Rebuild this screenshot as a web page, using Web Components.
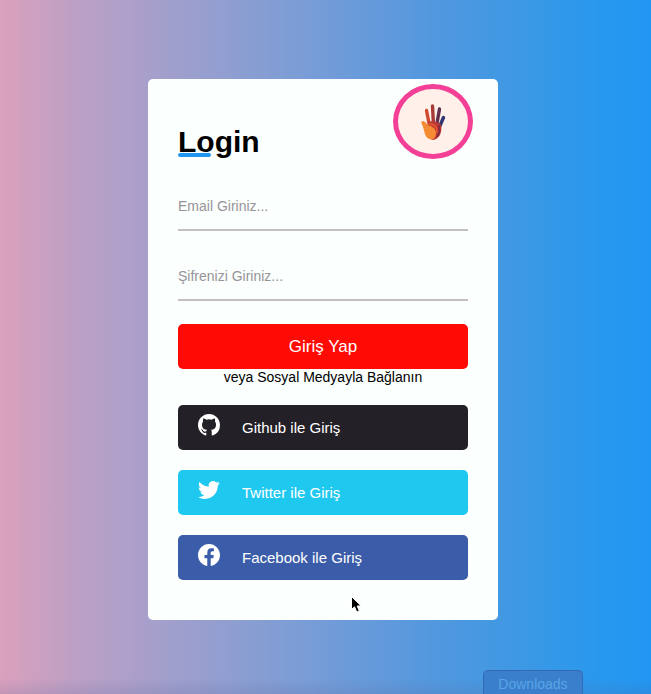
<!DOCTYPE html>
<html lang="tr">
<head>
<meta charset="utf-8">
<meta name="viewport" content="width=device-width, initial-scale=1">
<title>Login</title>
<style>
  html, body { margin: 0; min-height: 100%; }
  body { font-family: "Liberation Sans", Arial, Helvetica, sans-serif; font-size: 14px; line-height: 16px; color: #000; }
</style>
</head>
<body>
<login-page>
  <login-card heading="Login">
    <hand-avatar slot="badge"></hand-avatar>
    <line-field type="email" name="email" hint="Email Giriniz..."></line-field>
    <line-field type="password" name="password" hint="Şifrenizi Giriniz..."></line-field>
    <submit-button slot="actions">Giriş Yap</submit-button>
    <span slot="note">veya Sosyal Medyayla Bağlanın</span>
    <social-button slot="social" brand="github">Github ile Giriş</social-button>
    <social-button slot="social" brand="twitter">Twitter ile Giriş</social-button>
    <social-button slot="social" brand="facebook">Facebook ile Giriş</social-button>
  </login-card>
  <dock-label slot="overlay">Downloads</dock-label>
  <mouse-pointer slot="overlay"></mouse-pointer>
</login-page>

<script>
const define = (name, render) => customElements.define(name, class extends HTMLElement {
  constructor() { super(); this.attachShadow({ mode: "open" }); }
  connectedCallback() { this.shadowRoot.innerHTML = render(this); }
});

define("login-page", () => `
  <style>
    :host {
      display: flex; position: relative; box-sizing: border-box; min-height: 100vh; overflow: hidden;
      align-items: center; justify-content: center; padding: 5px 5px 0 0;
      background:
        linear-gradient(to top, rgba(90, 100, 150, .18), rgba(90, 100, 150, 0) 16px),
        linear-gradient(to right, #dba0bc 0%, #bea0c5 11%, #a19fcc 26%, #7b9dd6 46%, #5398de 66%, #3d98e4 80%, #2898ee 92%, #2196f3 100%);
    }
  </style>
  <slot></slot><slot name="overlay"></slot>`);

define("login-card", el => `
  <style>
    :host {
      display: block; position: relative; box-sizing: border-box; width: 100%; max-width: 350px;
      padding: 46px 30px 40px; border-radius: 5px; background: #fbfffd;
    }
    form { display: flex; flex-direction: column; }
    h1 { position: relative; align-self: flex-start; margin: 0 0 27px; font-size: 30px; line-height: 34px; }
    h1::after {
      content: ""; position: absolute; left: 0; bottom: 2px; width: 33px; height: 4px;
      border-radius: 2px; background: #2196f3;
    }
    .fields { display: grid; gap: 25px; margin-bottom: 23px; }
    .note { text-align: center; margin-bottom: 20px; }
    .social { display: grid; gap: 20px; }
    ::slotted([slot="badge"]) { position: absolute; top: 5px; right: 25px; }
  </style>
  <slot name="badge"></slot>
  <form>
    <h1>${el.getAttribute("heading")}</h1>
    <div class="fields"><slot></slot></div>
    <slot name="actions"></slot>
    <div class="note"><slot name="note"></slot></div>
    <div class="social"><slot name="social"></slot></div>
  </form>`);

define("line-field", el => `
  <style>
    :host { display: block; }
    input {
      display: block; box-sizing: border-box; width: 100%; height: 45px; padding: 0 0 3px; margin: 0;
      border: 0; border-bottom: 2px solid #c5bec3; border-radius: 0; outline: 0;
      background: transparent; color: #222; font: inherit;
    }
    input:focus { border-color: #2196f3; }
    input::placeholder { color: #98939a; opacity: 1; }
  </style>
  <input type="${el.getAttribute("type")}" name="${el.getAttribute("name")}"
    placeholder="${el.getAttribute("hint")}" aria-label="${el.getAttribute("hint")}">`);

define("submit-button", () => `
  <style>
    :host { display: block; }
    button {
      display: block; width: 100%; height: 45px; padding: 0; border: 0; border-radius: 5px;
      background: #ff0a05; color: #fff; font: inherit; font-size: 17px; cursor: pointer;
    }
  </style>
  <button type="submit"><slot></slot></button>`);

const brands = {
  github: { color: "#242027", icon: `<svg viewBox="0 0 16 16" aria-hidden="true"><path d="M8 0C3.58 0 0 3.58 0 8c0 3.54 2.29 6.53 5.47 7.59.4.07.55-.17.55-.38 0-.19-.01-.82-.01-1.49-2.01.37-2.53-.49-2.69-.94-.09-.23-.48-.94-.82-1.13-.28-.15-.68-.52-.01-.53.63-.01 1.08.58 1.23.82.72 1.21 1.87.87 2.33.66.07-.52.28-.87.51-1.07-1.78-.2-3.64-.89-3.64-3.95 0-.87.31-1.59.82-2.15-.08-.2-.36-1.02.08-2.12 0 0 .67-.21 2.2.82a7.6 7.6 0 0 1 4 0c1.53-1.04 2.2-.82 2.2-.82.44 1.1.16 1.92.08 2.12.51.56.82 1.27.82 2.15 0 3.07-1.87 3.75-3.65 3.95.29.25.54.73.54 1.48 0 1.07-.01 1.93-.01 2.2 0 .21.15.46.55.38A8.01 8.01 0 0 0 16 8c0-4.42-3.58-8-8-8z"/></svg>` },
  twitter: { color: "#1fc8ee", icon: `<svg viewBox="0 0 24 24" aria-hidden="true"><path d="M23.95 4.57a10 10 0 0 1-2.82.77 4.96 4.96 0 0 0 2.16-2.72c-.95.55-2 .95-3.13 1.18a4.92 4.92 0 0 0-8.38 4.48C7.69 8.1 4.07 6.13 1.64 3.16a4.82 4.82 0 0 0-.67 2.48c0 1.71.87 3.21 2.19 4.1a4.9 4.9 0 0 1-2.23-.62v.06a4.92 4.92 0 0 0 3.95 4.83 5 5 0 0 1-2.21.08 4.94 4.94 0 0 0 4.6 3.42A9.87 9.87 0 0 1 0 19.54a13.99 13.99 0 0 0 7.55 2.21c9.05 0 14-7.5 14-13.98 0-.21 0-.42-.02-.63a9.94 9.94 0 0 0 2.42-2.57z"/></svg>` },
  facebook: { color: "#3b5da9", icon: `<svg viewBox="0 0 24 24" aria-hidden="true"><path d="M24 12.07C24 5.4 18.63 0 12 0S0 5.4 0 12.07C0 18.1 4.39 23.1 10.13 24v-8.44H7.08v-3.49h3.05V9.41c0-3.02 1.79-4.69 4.53-4.69 1.31 0 2.68.24 2.68.24v2.97h-1.51c-1.49 0-1.96.93-1.96 1.89v2.25h3.33l-.53 3.49h-2.8V24C19.61 23.1 24 18.1 24 12.07z"/></svg>` }
};

define("social-button", el => {
  const { color, icon } = brands[el.getAttribute("brand")];
  return `
  <style>
    :host { display: block; }
    button {
      display: grid; grid-template-columns: 22px 1fr; column-gap: 22px; align-items: center;
      width: 100%; height: 45px; padding: 0 20px; border: 0; border-radius: 5px;
      background: ${color}; color: #fff; font: inherit; font-size: 15px; text-align: left; cursor: pointer;
    }
    svg { display: block; width: 22px; height: 22px; fill: currentColor; margin-bottom: 5px; }
  </style>
  <button type="button">${icon}<span><slot></slot></span></button>`;
});

define("hand-avatar", () => `
  <style>
    :host {
      display: grid; place-items: center; box-sizing: border-box; width: 80px; height: 75px;
      border: 5px solid #f43f97; border-radius: 50%; background: #fff1ea;
    }
    svg { display: block; width: 26px; height: 38px; }
  </style>
  <svg viewBox="0 0 26 38" fill="none" stroke-linecap="round" role="img" aria-label="El">
    <path d="M6.500 7.500L9.500 23" stroke="#cf4a31" stroke-width="3.400"/>
    <path d="M12.500 3L13.500 22" stroke="#a83a38" stroke-width="3.400"/>
    <path d="M19.500 6L16.500 23" stroke="#63304d" stroke-width="3.400"/>
    <path d="M23.500 14.500L19 25" stroke="#30366f" stroke-width="3.400"/>
    <path d="M8 19Q14 17 20.500 21Q22.500 26 20 32Q17 37 12 37Q7 33 8 19Z" fill="#bd3932"/>
    <path d="M19 23Q20.500 28 17.500 33" stroke="#7b2b42" stroke-width="1.800"/>
    <path d="M9 21Q16.500 20.500 17 29" stroke="#e85b32" stroke-width="1.600"/>
    <path d="M1.300 19.500Q2.500 17 5 19L8.500 22.500Q14 23 16 29Q16.500 34 12.500 36.800Q7 36.500 5 31.500Q4 26 1.300 19.500Z" fill="#f58b33"/>
  </svg>`);

define("dock-label", () => `
  <style>
    :host {
      position: absolute; right: 68px; bottom: 0; box-sizing: border-box; width: 100px; height: 24px;
      padding-top: 4px; border: 1px solid #3569b5; border-bottom: 0; border-radius: 5px 5px 0 0;
      background: #397fcb; color: #58a5e6; text-align: center; font-size: 14px; line-height: 18px;
    }
  </style>
  <slot></slot>`);

define("mouse-pointer", () => `
  <style>
    :host { position: absolute; left: 350px; top: 595px; pointer-events: none; }
    svg { display: block; width: 13px; height: 19px; }
  </style>
  <svg viewBox="0 0 13 19" aria-hidden="true"><path d="M1.500 1.500V14.500L4.500 11.800L6.800 17L9.300 16L7.200 11H11.200Z" fill="#000" stroke="#fff" stroke-width="1"/></svg>`);
</script>
</body>
</html>
